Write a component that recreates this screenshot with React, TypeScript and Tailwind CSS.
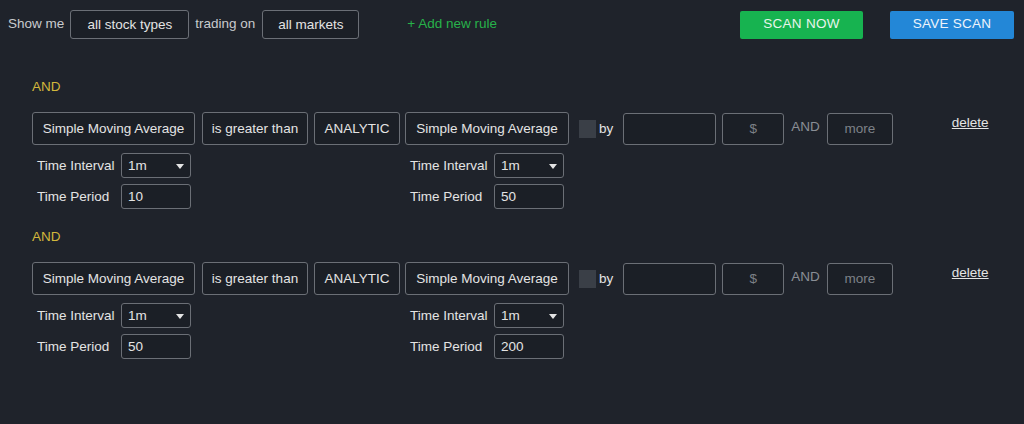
import React from "react";

const boxCls =
  "h-[33px] pt-px flex items-center justify-center rounded-[3px] border border-[#6b6f76] bg-[#1b1f26] text-[#e4e4e4] text-[13.5px] whitespace-nowrap";

function Caret() {
  return (
    <svg width="8" height="5" viewBox="0 0 8 5" className="text-[#e4e4e4]">
      <path d="M0 0h8L4 5z" fill="currentColor" />
    </svg>
  );
}

function Params({ period }: { period: string }) {
  return (
    <div className="mt-2 flex flex-col gap-[6px] pl-[5px]">
      <div className="flex items-center">
        <span className="w-[84px] pt-px text-[13.5px] text-[#e4e4e4]">Time Interval</span>
        <div className="h-[25px] w-[70px] pt-px flex items-center justify-between rounded-[3px] border border-[#6b6f76] bg-[#1b1f26] pl-[6px] pr-[6px] text-[13.5px] text-[#e4e4e4]">
          <span>1m</span>
          <Caret />
        </div>
      </div>
      <div className="flex items-center">
        <span className="w-[84px] pt-px text-[13.5px] text-[#e4e4e4]">Time Period</span>
        <div className="h-[25px] w-[70px] pt-px flex items-center rounded-[3px] border border-[#6b6f76] bg-[#1b1f26] pl-[6px] text-[13.5px] text-[#e4e4e4]">
          {period}
        </div>
      </div>
    </div>
  );
}

function Rule({ left, right }: { left: string; right: string }) {
  return (
    <div className="flex flex-col">
      <div className="h-4 leading-4 text-[13.5px] text-[#d2b73c]">AND</div>
      <div className="mt-[17px] flex items-start">
        {/* left indicator */}
        <div className="w-[163px] flex flex-col">
          <div className={boxCls}>Simple Moving Average</div>
          <Params period={left} />
        </div>
        <div className={`${boxCls} ml-[7px] w-[106px]`}>is greater than</div>
        <div className={`${boxCls} ml-[6px] w-[86px]`}>ANALYTIC</div>
        {/* right indicator */}
        <div className="ml-[5px] w-[164px] flex flex-col">
          <div className={boxCls}>Simple Moving Average</div>
          <Params period={right} />
        </div>
        <div className="ml-[10px] h-[33px] flex items-center">
          <div className="h-[18px] w-[17px] bg-[#3a3f47]" />
          <span className="ml-[3px] pt-px text-[13.5px] text-[#e4e4e4]">by</span>
        </div>
        <div className="ml-[10px] mt-px h-[32px] w-[93px] rounded-[3px] border border-[#6b6f76] bg-[#1b1f26]" />
        <div className="ml-[6px] mt-px h-[32px] w-[62px] flex items-center justify-center rounded-[3px] border border-[#6b6f76] bg-[#1b1f26] text-[13.5px] text-[#7d8188]">
          $
        </div>
        <div className="ml-[7px] h-[30px] flex items-center text-[13.5px] text-[#8a8e95]">AND</div>
        <div className="ml-[7px] mt-px h-[32px] w-[66px] flex items-center justify-center rounded-[3px] border border-[#6b6f76] bg-[#1b1f26] text-[13.5px] text-[#7d8188]">
          more
        </div>
        <a className="ml-[59px] mt-[3px] leading-4 text-[13.5px] text-[#e4e4e4] underline cursor-pointer">delete</a>
      </div>
    </div>
  );
}

export default function App() {
  return (
    <div
      className="min-h-screen w-full bg-[#1f232b] pb-10"
      style={{ fontFamily: '"Liberation Sans", Arial, sans-serif' }}
    >
      {/* Top bar */}
      <div className="flex items-center pt-[10px] pl-2 pr-[10px]">
        <span className="text-[13.5px] text-[#c9cbce]">Show me</span>
        <div className="ml-[6px] h-[29px] w-[119px] pt-px flex items-center justify-center rounded-[3px] border border-[#6b6f76] bg-[#1b1f26] text-[13.5px] text-[#e4e4e4]">
          all stock types
        </div>
        <span className="ml-[6px] text-[13.5px] text-[#c9cbce]">trading on</span>
        <div className="ml-[7px] h-[29px] w-[97px] pt-px flex items-center justify-center rounded-[3px] border border-[#6b6f76] bg-[#1b1f26] text-[13.5px] text-[#e4e4e4]">
          all markets
        </div>
        <button className="ml-[48px] text-[13.5px] text-[#27b24a]">+ Add new rule</button>
        <button className="ml-auto h-[28px] w-[123px] rounded-[2px] bg-[#17b350] text-[13.5px] tracking-[0.02em] text-[#e8f5ec]">
          SCAN NOW
        </button>
        <button className="ml-[27px] h-[28px] w-[124px] rounded-[2px] bg-[#2387d7] text-[13.5px] tracking-[0.02em] text-[#eef4fb]">
          SAVE SCAN
        </button>
      </div>

      {/* Rules */}
      <div className="mt-[40px] pl-[32px] flex flex-col gap-5">
        <Rule left="10" right="50" />
        <Rule left="50" right="200" />
      </div>
    </div>
  );
}
